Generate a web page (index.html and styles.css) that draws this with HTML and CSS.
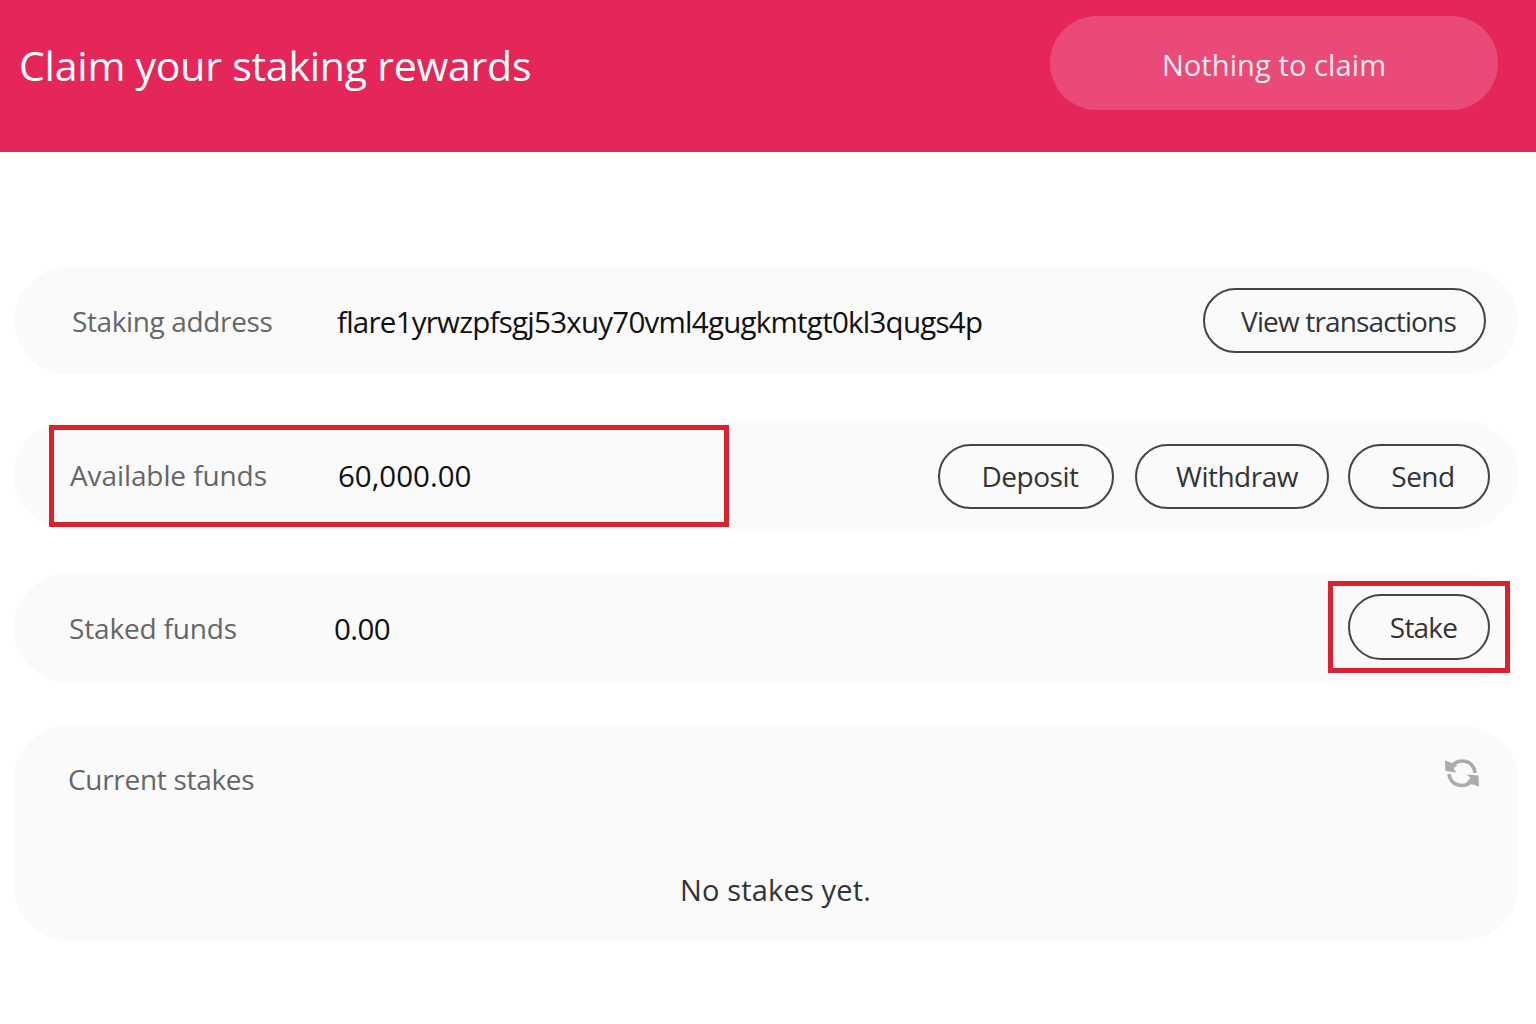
FILE: index.html
```html
<!DOCTYPE html>
<html lang="en">
<head>
<meta charset="utf-8">
<title>Claim your staking rewards</title>
<link rel="stylesheet" href="styles.css">
</head>
<body>
<header class="banner">
  <h1 class="banner-title">Claim your staking rewards</h1>
  <button class="claim-btn">Nothing to claim</button>
</header>
<main class="content">
  <section class="row row-address">
    <span class="label label-address">Staking address</span>
    <span class="value value-address">flare1yrwzpfsgj53xuy70vml4gugkmtgt0kl3qugs4p</span>
    <div class="actions actions-address"><button class="pill pill-view">View transactions</button></div>
  </section>
  <section class="row row-available">
    <span class="label label-available">Available funds</span>
    <span class="value value-available">60,000.00</span>
    <div class="actions actions-available">
      <button class="pill pill-deposit">Deposit</button>
      <button class="pill pill-withdraw">Withdraw</button>
      <button class="pill pill-send">Send</button>
    </div>
    <div class="mark mark-available"></div>
  </section>
  <section class="row row-staked">
    <span class="label label-staked">Staked funds</span>
    <span class="value value-staked">0.00</span>
    <div class="actions actions-staked"><button class="pill pill-stake">Stake</button></div>
    <div class="mark mark-stake"></div>
  </section>
  <section class="card">
    <div class="card-head">
      <span class="label label-current">Current stakes</span>
      <svg class="refresh" viewBox="0 0 36 32" width="36" height="32" aria-hidden="true">
        <path d="M7 11.5C9 6.5 13 4 18 4c5.500 0 10 3 12 7.500 .7 1.700 1 3 1 4.500" fill="none" stroke="#a9abad" stroke-width="3.600"/>
        <path d="M1 3.500 13.500 8 9.500 11.500 12.500 15.500 1.500 14z" fill="#a9abad"/>
        <path d="M29 21.500C27 26 23 28.500 18 28.500c-5.500 0-10-3-12-7.500-.6-1.500-.9-2.800-1-4" fill="none" stroke="#a9abad" stroke-width="3.600"/>
        <path d="M35 29.500 22.500 25.500 26.500 21 22.500 17.500 34.500 18.500z" fill="#a9abad"/>
      </svg>
    </div>
    <p class="empty">No stakes yet.</p>
  </section>
</main>
</body>
</html>
```
FILE: styles.css
```css
* { box-sizing: border-box; }
html, body { margin: 0; padding: 0; }
body {
  width: 1536px;
  height: 1024px;
  overflow: hidden;
  background: #fff;
  font-family: "Open Sans", "Noto Sans", sans-serif;
  color: #111;
}
.banner {
  height: 152px;
  background: #e42658;
  display: flex;
  align-items: flex-start;
  justify-content: space-between;
  padding: 16px 38px 0 19px;
}
.banner-title {
  margin: 21px 0 0;
  font-size: 41px;
  line-height: 56px;
  font-weight: 400;
  letter-spacing: -0.23px;
  color: #fff;
}
.claim-btn {
  width: 448px;
  height: 94px;
  padding: 4px 0 0;
  border: 0;
  border-radius: 47px;
  background: #ea4a78;
  color: #fdeaf0;
  font: 400 29px/40px "Open Sans", "Noto Sans", sans-serif;
  letter-spacing: 0.1px;
}
.content {
  display: flex;
  flex-direction: column;
  padding: 116px 18px 0 14px;
}
.row {
  position: relative;
  display: flex;
  align-items: center;
  height: 108px;
  border-radius: 54px;
  background: #fafafa;
}
.row-address { height: 106px; }
.row-available { margin-top: 47px; }
.row-staked { margin-top: 45px; }
.label {
  font-size: 28px;
  font-weight: 400;
  letter-spacing: -0.3px;
  color: #666;
}
.value {
  font-size: 29.500px;
  font-weight: 400;
  letter-spacing: -0.55px;
  color: #111;
}
.label-address { width: 265px; margin-left: 58px; letter-spacing: -0.37px; }
.label-available { width: 268px; margin-left: 56px; letter-spacing: -0.1px; }
.label-staked { width: 265px; margin-left: 55px; letter-spacing: -0.17px; }
.value-address { letter-spacing: -0.75px; }
.value-available { letter-spacing: 0; }
.actions { margin-left: auto; display: flex; align-items: center; }
.actions-address { padding-right: 32px; margin-top: -2px; }
.actions-available { padding-right: 28px; margin-top: 2px; }
.actions-staked { padding-right: 28px; margin-top: -2px; }
.pill {
  height: 65px;
  padding: 0 0 0 8px;
  border: 2.500px solid #454545;
  border-radius: 33px;
  background: transparent;
  color: #333;
  font: 400 28px/38px "Open Sans", "Noto Sans", sans-serif;
  letter-spacing: -0.5px;
}
.pill-deposit { width: 176px; margin-right: 21px; }
.pill-withdraw { width: 194px; margin-right: 19px; padding-left: 10px; }
.pill-send { width: 142px; }
.pill-stake { width: 142px; height: 66px; padding-left: 9px; letter-spacing: -0.8px; }
.pill-view { width: 283px; padding-top: 1px; letter-spacing: -0.85px; }
.mark {
  position: absolute;
  border: 5px solid #d8232f;
}
.mark-available { left: 35px; top: 4px; width: 680px; height: 102px; }
.mark-stake { right: 8px; top: 7px; width: 182px; height: 92px; }
.card {
  margin-top: 44px;
  height: 214px;
  border-radius: 54px;
  background: #fafafa;
}
.card-head {
  display: flex;
  align-items: flex-start;
  justify-content: space-between;
  padding: 34px 38px 0 54px;
}
.refresh { margin-top: -3px; }
.empty {
  margin: 72px 0 0;
  padding-left: 19px;
  text-align: center;
  font-size: 29px;
  font-weight: 400;
  letter-spacing: 0.17px;
  color: #333;
}
```
